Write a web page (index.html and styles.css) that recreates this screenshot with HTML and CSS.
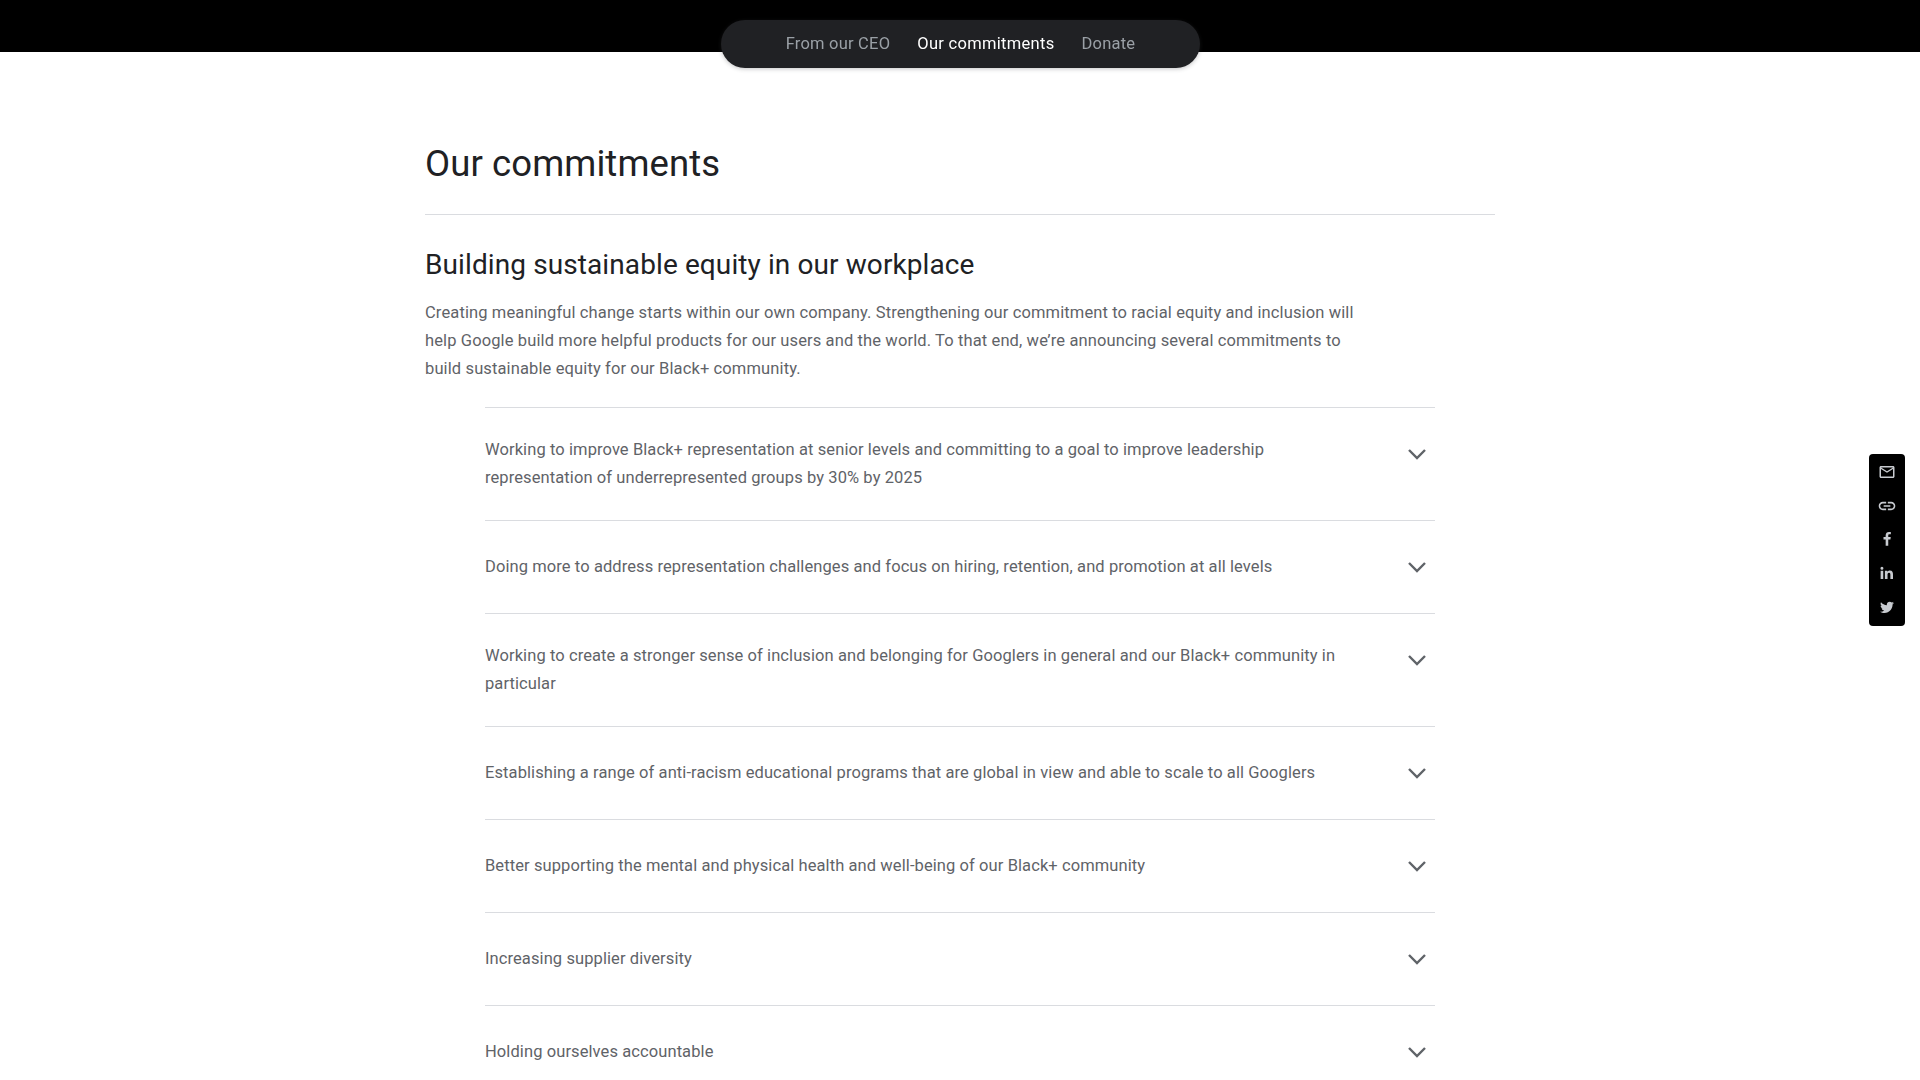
FILE: index.html
```html
<!DOCTYPE html>
<html lang="en">
<head>
    <meta charset="UTF-8">
    <meta name="viewport" content="width=device-width, initial-scale=1.0">
    <title>Our commitments</title>
    <link rel="stylesheet" href="styles.css">
</head>
<body>
    <header class="top-band"></header>

    <nav class="jump-nav">
        <a href="#ceo">From our CEO</a>
        <a href="#commitments" class="active">Our commitments</a>
        <a href="#donate">Donate</a>
    </nav>

    <main class="content" id="commitments">
        <h1 class="page-title">Our commitments</h1>

        <section class="commitment">
            <h2 class="section-title">Building sustainable equity in our workplace</h2>
            <p class="section-text">Creating meaningful change starts within our own company. Strengthening our commitment to racial equity and inclusion will<br>help Google build more helpful products for our users and the world. To that end, we’re announcing several commitments to<br>build sustainable equity for our Black+ community.</p>

            <ul class="accordion">
                <li class="accordion-item">
                    <span class="accordion-label">Working to improve Black+ representation at senior levels and committing to a goal to improve leadership<br>representation of underrepresented groups by 30% by 2025</span>
                    <svg class="chevron" viewBox="0 0 18 11"><path d="M1 1l8 8 8-8"/></svg>
                </li>
                <li class="accordion-item">
                    <span class="accordion-label">Doing more to address representation challenges and focus on hiring, retention, and promotion at all levels</span>
                    <svg class="chevron" viewBox="0 0 18 11"><path d="M1 1l8 8 8-8"/></svg>
                </li>
                <li class="accordion-item">
                    <span class="accordion-label">Working to create a stronger sense of inclusion and belonging for Googlers in general and our Black+ community in<br>particular</span>
                    <svg class="chevron" viewBox="0 0 18 11"><path d="M1 1l8 8 8-8"/></svg>
                </li>
                <li class="accordion-item">
                    <span class="accordion-label">Establishing a range of anti-racism educational programs that are global in view and able to scale to all Googlers</span>
                    <svg class="chevron" viewBox="0 0 18 11"><path d="M1 1l8 8 8-8"/></svg>
                </li>
                <li class="accordion-item">
                    <span class="accordion-label">Better supporting the mental and physical health and well-being of our Black+ community</span>
                    <svg class="chevron" viewBox="0 0 18 11"><path d="M1 1l8 8 8-8"/></svg>
                </li>
                <li class="accordion-item">
                    <span class="accordion-label">Increasing supplier diversity</span>
                    <svg class="chevron" viewBox="0 0 18 11"><path d="M1 1l8 8 8-8"/></svg>
                </li>
                <li class="accordion-item">
                    <span class="accordion-label">Holding ourselves accountable</span>
                    <svg class="chevron" viewBox="0 0 18 11"><path d="M1 1l8 8 8-8"/></svg>
                </li>
            </ul>
        </section>
    </main>

    <aside class="share-bar">
        <a href="#" aria-label="Email">
            <svg viewBox="0 0 24 24"><path d="M22 6c0-1.1-.9-2-2-2H4c-1.1 0-2 .9-2 2v12c0 1.1.9 2 2 2h16c1.1 0 2-.9 2-2V6zm-2 0l-8 5-8-5h16zm0 12H4V8l8 5 8-5v10z"/></svg>
        </a>
        <a href="#" aria-label="Copy link">
            <svg class="icon-lg" viewBox="0 0 24 24"><path d="M3.9 12c0-1.71 1.39-3.1 3.1-3.1h4V7H7c-2.76 0-5 2.24-5 5s2.24 5 5 5h4v-1.9H7c-1.71 0-3.1-1.39-3.1-3.1zM8 13h8v-2H8v2zm9-6h-4v1.9h4c1.71 0 3.1 1.39 3.1 3.1s-1.39 3.1-3.1 3.1h-4V17h4c2.76 0 5-2.24 5-5s-2.24-5-5-5z"/></svg>
        </a>
        <a href="#" aria-label="Facebook">
            <svg class="icon-lg" viewBox="0 0 24 24"><path d="M13.5 20v-7.3h2.6l.4-3h-3V7.8c0-.9.3-1.4 1.5-1.4h1.6V3.7c-.3 0-1.2-.1-2.3-.1-2.3 0-3.9 1.4-3.9 4v2.1H7.8v3h2.6V20z"/></svg>
        </a>
        <a href="#" aria-label="LinkedIn">
            <svg viewBox="0 0 24 24"><path d="M3.5 9H7v11H3.5zM5.25 3.5a2 2 0 1 1 0 4 2 2 0 0 1 0-4zM9.2 9h3.3v1.5c.5-.9 1.6-1.8 3.3-1.8 3.5 0 4.2 2.3 4.2 5.3v6h-3.5v-5.300c0-1.300 0-2.900-1.800-2.900s-2 1.400-2 2.800V20H9.200z"/></svg>
        </a>
        <a href="#" aria-label="Twitter">
            <svg class="icon-sm" viewBox="0 0 24 24"><path d="M22.46 6c-.77.35-1.6.58-2.46.69.88-.53 1.56-1.37 1.88-2.38-.83.5-1.75.85-2.72 1.05C18.37 4.5 17.26 4 16 4c-2.35 0-4.27 1.92-4.27 4.29 0 .34.04.67.11.98C8.28 9.09 5.11 7.38 3 4.79c-.37.63-.58 1.37-.58 2.15 0 1.49.75 2.81 1.91 3.56-.71 0-1.37-.2-1.95-.5v.03c0 2.08 1.48 3.82 3.44 4.21a4.22 4.22 0 0 1-1.93.07 4.28 4.28 0 0 0 4 2.98 8.52 8.52 0 0 1-5.33 1.84c-.34 0-.68-.02-1.02-.06C3.44 20.29 5.7 21 8.12 21 16 21 20.33 14.46 20.33 8.79c0-.19 0-.37-.01-.56.84-.6 1.56-1.36 2.14-2.23z"/></svg>
        </a>
    </aside>
</body>
</html>
```
FILE: styles.css
```css
* {
    margin: 0;
    padding: 0;
    box-sizing: border-box;
}

body {
    height: 100vh;
    overflow: hidden;
    background-color: #fff;
    color: #5f6368;
    font-family: 'Roboto', sans-serif;
    font-size: 16.5px;
    line-height: 28px;
}

a {
    color: inherit;
    text-decoration: none;
}

.top-band {
    height: 52px;
    background-color: #000;
}

.jump-nav {
    position: fixed;
    top: 20px;
    left: 721px;
    width: 479px;
    height: 48px;
    border-radius: 24px;
    background-color: #202124;
    box-shadow: 0 1px 4px rgba(60, 64, 67, 0.3);
    color: #9aa0a6;
    letter-spacing: 0.22px;
    display: flex;
    align-items: center;
    justify-content: center;
    gap: 27px;
    white-space: nowrap;
}

.jump-nav .active {
    color: #fff;
    letter-spacing: 0.3px;
}

.content {
    width: 1070px;
    margin: 0 auto;
    padding-top: 90px;
}

.page-title {
    height: 73px;
    border-bottom: 1px solid #dadce0;
    color: #202124;
    font-size: 36.5px;
    font-weight: 400;
    line-height: 44px;
    letter-spacing: 0.1px;
}

.section-title {
    margin-top: 32px;
    color: #202124;
    font-size: 28px;
    font-weight: 400;
    line-height: 36px;
    letter-spacing: 0.1px;
}

.section-text {
    margin-top: 16px;
    letter-spacing: 0.12px;
    white-space: nowrap;
}

.accordion {
    width: 950px;
    margin: 24px auto 0;
    list-style: none;
}

.accordion-item {
    display: flex;
    justify-content: space-between;
    min-height: 93px;
    padding: 28px 9px 28px 0;
    border-top: 1px solid #dadce0;
}

.accordion-label {
    align-self: center;
    letter-spacing: 0.09px;
    white-space: nowrap;
}

.chevron {
    width: 18px;
    height: 11px;
    margin-top: 13px;
    fill: none;
    stroke: #5f6368;
    stroke-width: 2.4;
}

.share-bar {
    position: fixed;
    top: 454px;
    right: 15px;
    width: 36px;
    height: 172px;
    padding: 1px 0 2px;
    border-radius: 4px;
    background-color: #000;
    display: flex;
    flex-direction: column;
}

.share-bar a {
    flex: 1;
    display: flex;
    align-items: center;
    justify-content: center;
}

.share-bar svg {
    width: 18px;
    height: 18px;
    fill: #c8cbd0;
}

.share-bar .icon-lg {
    width: 20px;
    height: 20px;
}

.share-bar .icon-sm {
    width: 16px;
    height: 16px;
}
```
